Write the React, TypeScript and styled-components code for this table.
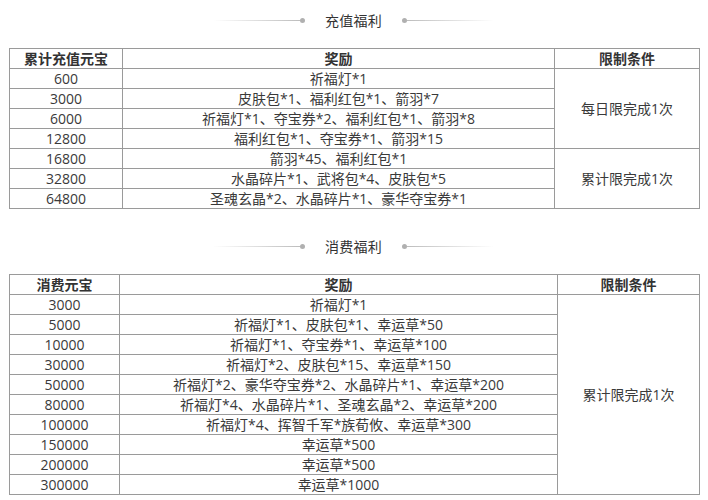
import React, { FC } from "react";
import styled, { createGlobalStyle } from "styled-components";

const GlobalStyle = createGlobalStyle`
  html, body {
    margin: 0;
    padding: 0;
    background: #fff;
  }
  body {
    font-family: "Open Sans", "Noto Sans CJK SC", "Noto Sans", sans-serif;
    color: #333;
  }
`;

const Page = styled.div`
  width: 708px;
  padding: 10px 10px 0 9px;
  box-sizing: border-box;
`;

const TitleBar = styled.div<{ $top: number }>`
  display: flex;
  align-items: center;
  justify-content: center;
  height: 20px;
  margin-top: ${(p) => p.$top}px;
  margin-bottom: 18px;
  font-size: 14px;
  color: #333;
`;

const Line = styled.span<{ $side: "left" | "right" }>`
  display: flex;
  align-items: center;
  width: 92px;
  flex-direction: ${(p) => (p.$side === "left" ? "row" : "row-reverse")};

  &::before {
    content: "";
    flex: 1;
    height: 1px;
    background: linear-gradient(
      ${(p) => (p.$side === "left" ? "to right" : "to left")},
      rgba(190, 190, 190, 0),
      #bdbdbd
    );
  }

  &::after {
    content: "";
    width: 5px;
    height: 5px;
    border-radius: 50%;
    background: #b0b0b0;
  }
`;

const TitleText = styled.span`
  margin: 0 20px;
  letter-spacing: 0.3px;
`;

const Table = styled.table`
  width: 690px;
  border-collapse: collapse;
  table-layout: fixed;
  font-size: 14px;
  color: #3a3a3a;
`;

const Th = styled.th`
  height: 19px;
  padding: 0;
  line-height: 18px;
  border: 1px solid #9a9a9a;
  font-weight: bold;
  text-align: center;
  color: #333;
`;

const Td = styled.td`
  height: 19px;
  padding: 0;
  line-height: 18px;
  border: 1px solid #9a9a9a;
  text-align: center;
  white-space: nowrap;
`;

interface Row {
  amount: string;
  reward: string;
  limit?: string;
  span?: number;
}

const chargeRows: Row[] = [
  { amount: "600", reward: "祈福灯*1", limit: "每日限完成1次", span: 4 },
  { amount: "3000", reward: "皮肤包*1、福利红包*1、箭羽*7" },
  { amount: "6000", reward: "祈福灯*1、夺宝券*2、福利红包*1、箭羽*8" },
  { amount: "12800", reward: "福利红包*1、夺宝券*1、箭羽*15" },
  { amount: "16800", reward: "箭羽*45、福利红包*1", limit: "累计限完成1次", span: 3 },
  { amount: "32800", reward: "水晶碎片*1、武将包*4、皮肤包*5" },
  { amount: "64800", reward: "圣魂玄晶*2、水晶碎片*1、豪华夺宝券*1" },
];

const spendRows: Row[] = [
  { amount: "3000", reward: "祈福灯*1", limit: "累计限完成1次", span: 10 },
  { amount: "5000", reward: "祈福灯*1、皮肤包*1、幸运草*50" },
  { amount: "10000", reward: "祈福灯*1、夺宝券*1、幸运草*100" },
  { amount: "30000", reward: "祈福灯*2、皮肤包*15、幸运草*150" },
  { amount: "50000", reward: "祈福灯*2、豪华夺宝券*2、水晶碎片*1、幸运草*200" },
  { amount: "80000", reward: "祈福灯*4、水晶碎片*1、圣魂玄晶*2、幸运草*200" },
  { amount: "100000", reward: "祈福灯*4、挥智千军*族荀攸、幸运草*300" },
  { amount: "150000", reward: "幸运草*500" },
  { amount: "200000", reward: "幸运草*500" },
  { amount: "300000", reward: "幸运草*1000" },
];

const Title: FC<{ text: string; top: number }> = ({ text, top }) => (
  <TitleBar $top={top}>
    <Line $side="left" />
    <TitleText>{text}</TitleText>
    <Line $side="right" />
  </TitleBar>
);

const RewardTable: FC<{ head: string; rows: Row[]; widths: number[] }> = ({
  head,
  rows,
  widths,
}) => (
  <Table>
    <colgroup>
      {widths.map((w, i) => (
        <col key={i} style={{ width: w }} />
      ))}
    </colgroup>
    <thead>
      <tr>
        <Th>{head}</Th>
        <Th>奖励</Th>
        <Th>限制条件</Th>
      </tr>
    </thead>
    <tbody>
      {rows.map((r) => (
        <tr key={r.amount}>
          <Td>{r.amount}</Td>
          <Td>{r.reward}</Td>
          {r.limit && <Td rowSpan={r.span}>{r.limit}</Td>}
        </tr>
      ))}
    </tbody>
  </Table>
);

const App: FC = () => (
  <Page>
    <GlobalStyle />
    <Title text="充值福利" top={0} />
    <RewardTable head="累计充值元宝" rows={chargeRows} widths={[113, 432, 145]} />
    <Title text="消费福利" top={27} />
    <RewardTable head="消费元宝" rows={spendRows} widths={[110, 438, 142]} />
  </Page>
);

export default App;
